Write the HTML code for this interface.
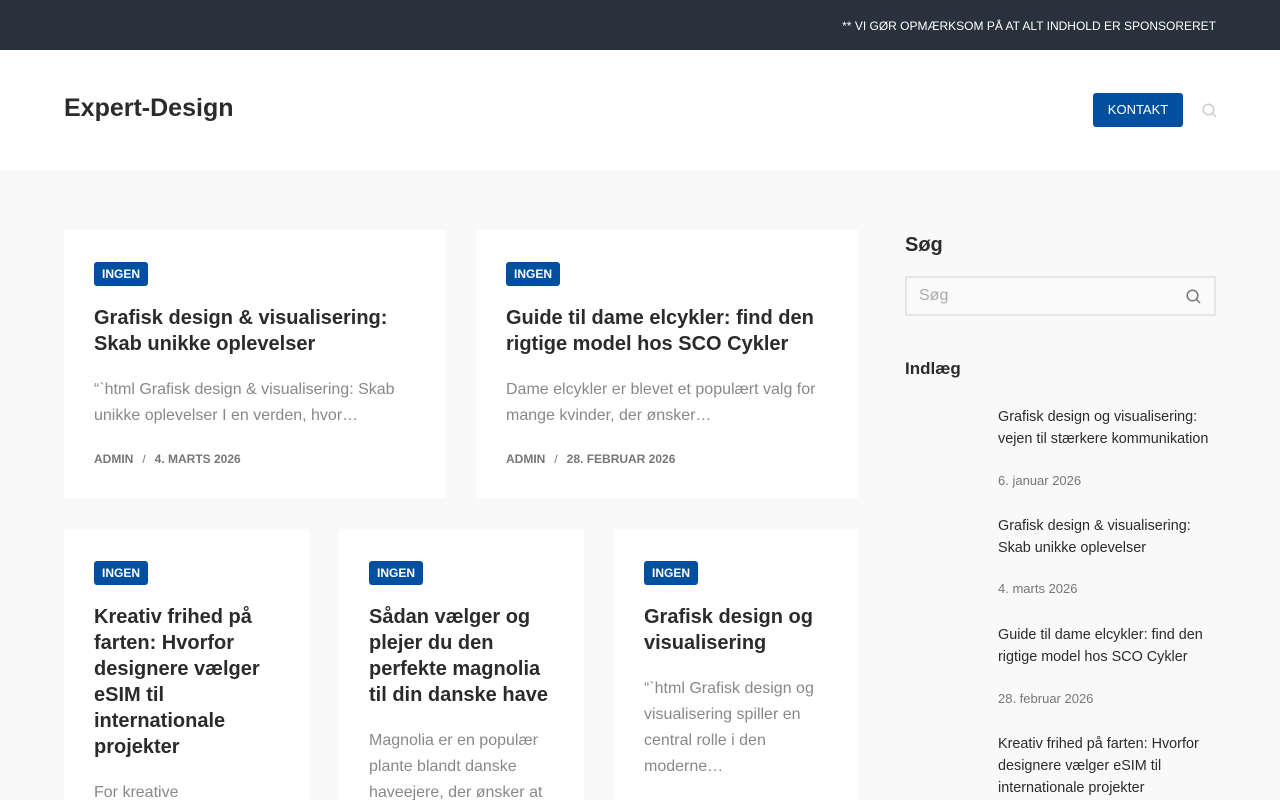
<!DOCTYPE html>
<html><head><meta charset="utf-8"><style>
*{margin:0;padding:0;box-sizing:border-box}
html,body{width:1280px;height:800px;overflow:hidden}
body{background:#f9f9f9;font-family:"Liberation Sans",sans-serif;color:#2b2b2b;position:relative}
.top{height:50px;background:#29313c;color:#fff;font-size:12px;text-align:right;padding:19px 64px 0 0}
.hdr{height:120px;background:#fff;position:relative}
.logo{position:absolute;left:64px;top:93px;font-size:25px;font-weight:bold;line-height:30px}
.btn{position:absolute;left:1093px;top:93px;width:90px;height:34px;background:#0150a0;color:#fff;font-size:13px;border-radius:3px;text-align:center;line-height:34px}
.card{position:absolute;background:#fff;padding:32px 30px 0}
.tag{display:inline-block;background:#0150a0;color:#fff;font-size:12px;font-weight:bold;padding:0 8px;height:24px;line-height:25px;border-radius:3px;vertical-align:top}
.card h2{font-size:20px;line-height:26px;margin-top:19px;font-weight:bold}
.card p{font-size:16px;line-height:26px;color:#888;margin-top:20px}
.meta{font-size:12px;font-weight:bold;color:#777;margin-top:23px}
.meta span{margin:0 9px;font-weight:normal}
.side{position:absolute;left:905px;width:311px}
.pi{position:absolute;left:998px;width:220px;font-size:14.4px;line-height:22px}
.pd{position:absolute;left:998px;font-size:13px;color:#777}
</style></head><body>
<div class="top">** VI GØR OPMÆRKSOM PÅ AT ALT INDHOLD ER SPONSORERET</div>
<div class="hdr"></div>
<div class="logo">Expert-Design</div>
<div class="btn">KONTAKT</div>
<svg style="position:absolute;left:1202px;top:103px" width="15" height="15" viewBox="0 0 15 15"><circle cx="6.5" cy="6.5" r="5.3" fill="none" stroke="#ccc" stroke-width="1.5"/><path d="M10.5 10.5L14 14" stroke="#ccc" stroke-width="1.5"/></svg>

<div class="card" style="left:64px;top:230px;width:382px;height:268px"><span class="tag">INGEN</span><h2>Grafisk design &amp; visualisering: Skab unikke oplevelser</h2><p>“`html Grafisk design &amp; visualisering: Skab unikke oplevelser I en verden, hvor…</p><div class="meta">ADMIN<span>/</span>4. MARTS 2026</div></div>
<div class="card" style="left:476px;top:230px;width:382px;height:268px"><span class="tag">INGEN</span><h2>Guide til dame elcykler: find den rigtige model hos SCO Cykler</h2><p>Dame elcykler er blevet et populært valg for mange kvinder, der ønsker…</p><div class="meta">ADMIN<span>/</span>28. FEBRUAR 2026</div></div>
<div class="card" style="left:64px;top:529px;width:245px;height:300px"><span class="tag">INGEN</span><h2>Kreativ frihed på farten: Hvorfor designere vælger eSIM til internationale projekter</h2><p>For kreative</p></div>
<div class="card" style="left:339px;top:529px;width:245px;height:300px"><span class="tag">INGEN</span><h2>Sådan vælger og plejer du den perfekte magnolia til din danske have</h2><p>Magnolia er en populær plante blandt danske haveejere, der ønsker at</p></div>
<div class="card" style="left:614px;top:529px;width:244px;height:300px"><span class="tag">INGEN</span><h2>Grafisk design og visualisering</h2><p>“`html Grafisk design og visualisering spiller en central rolle i den moderne…</p></div>

<div class="side" style="top:234px;font-size:20px;font-weight:bold">Søg</div>
<div class="side" style="top:276px;height:40px;border:2px solid #e4e6ea;background:#fafafa;font-size:16px;color:#aaa;padding:9px 12px">Søg
<svg style="position:absolute;right:13px;top:11px" width="15" height="15" viewBox="0 0 15 15"><circle cx="6.5" cy="6.5" r="5.3" fill="none" stroke="#777" stroke-width="1.5"/><path d="M10.5 10.5L14 14" stroke="#777" stroke-width="1.5"/></svg></div>
<div class="side" style="top:359px;font-size:17px;font-weight:bold">Indlæg</div>
<div class="pi" style="top:406px">Grafisk design og visualisering: vejen til stærkere kommunikation</div>
<div class="pd" style="top:473px">6. januar 2026</div>
<div class="pi" style="top:515px">Grafisk design &amp; visualisering: Skab unikke oplevelser</div>
<div class="pd" style="top:581px">4. marts 2026</div>
<div class="pi" style="top:624px">Guide til dame elcykler: find den rigtige model hos SCO Cykler</div>
<div class="pd" style="top:691px">28. februar 2026</div>
<div class="pi" style="top:733px">Kreativ frihed på farten: Hvorfor designere vælger eSIM til internationale projekter</div>
</body></html>
